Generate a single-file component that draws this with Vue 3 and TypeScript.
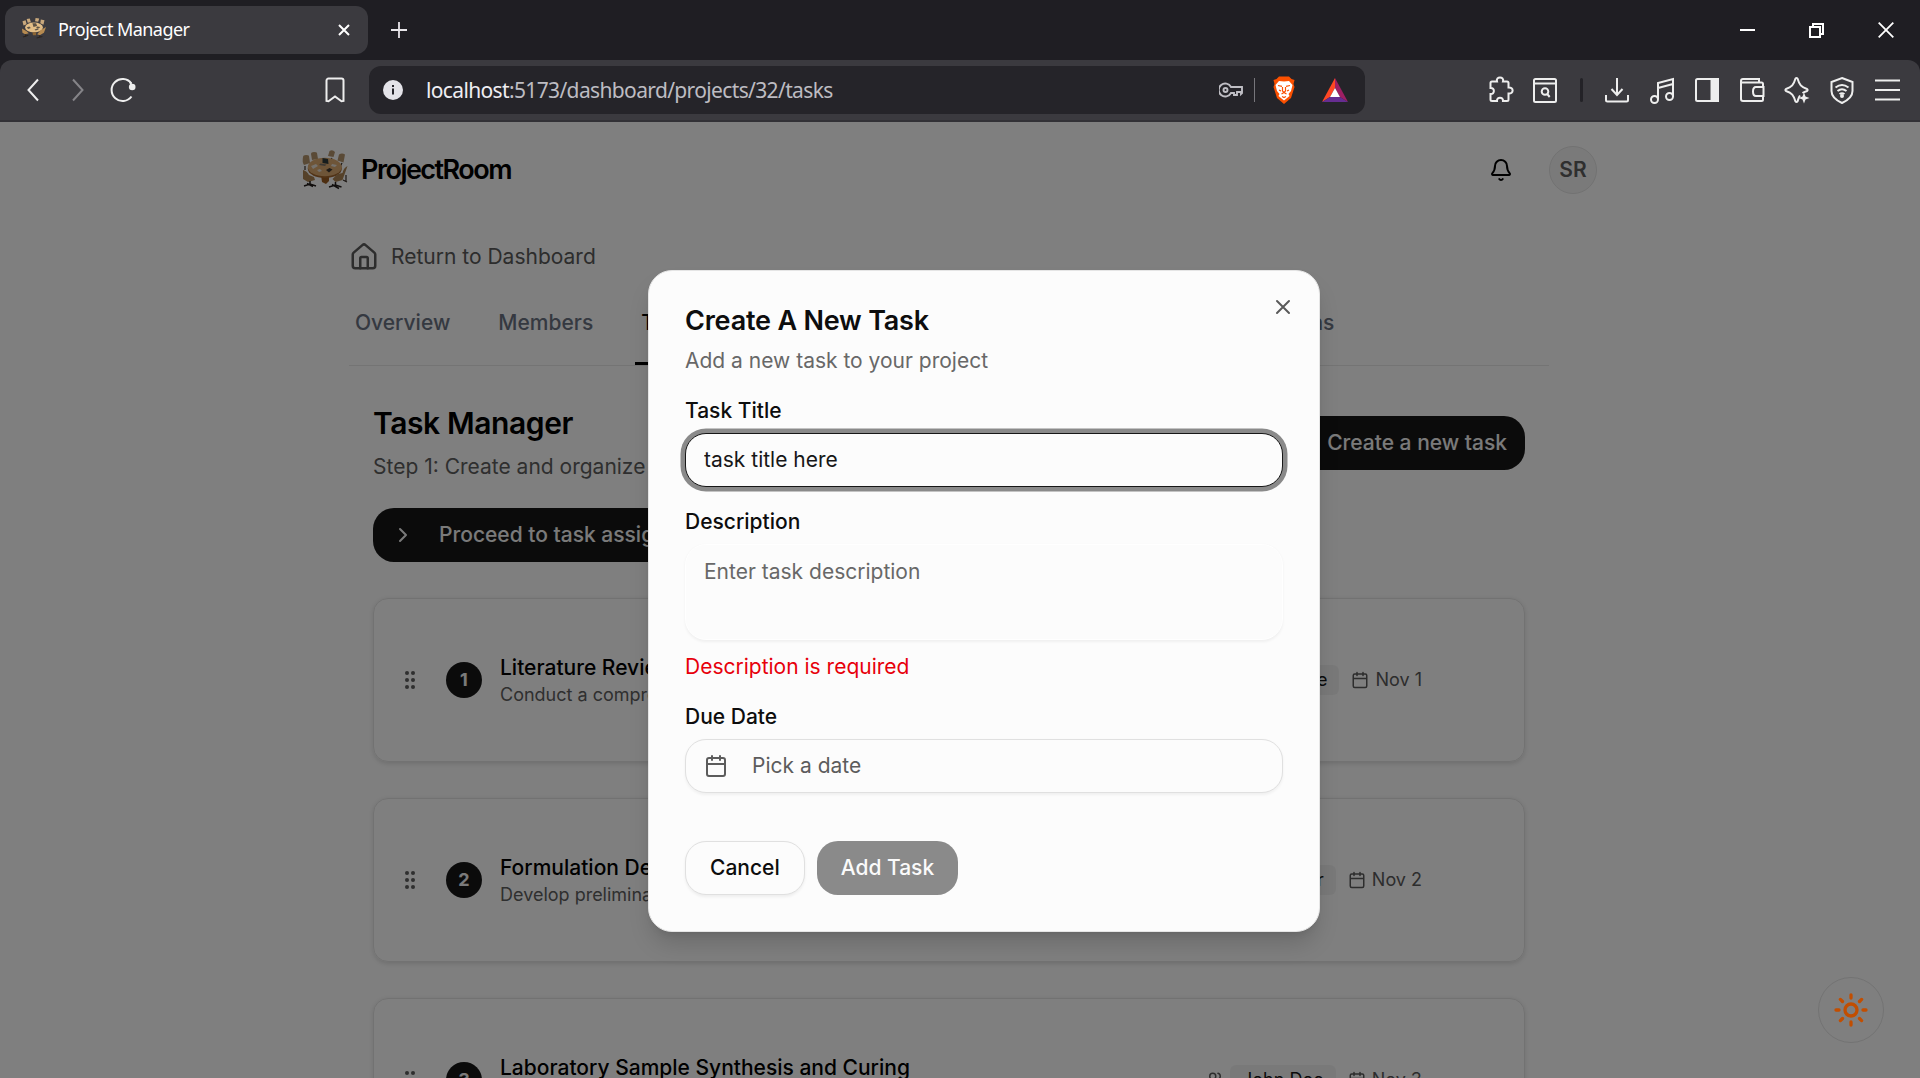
<script setup lang="ts">
import { ref } from 'vue'

interface Task {
  id: number
  title: string
  description: string
  assignee: string
  due: string
}

const tabs = ['Overview', 'Members', 'Tasks', 'Discussions', 'Submissions']
const activeTab = ref('Tasks')
const taskTitle = ref('task title here')
const description = ref('')
const tasks: Task[] = [
  { id: 1, title: 'Literature Review', description: 'Conduct a comprehensive review', assignee: 'John Doe', due: 'Nov 1' },
  { id: 2, title: 'Formulation Design', description: 'Develop preliminary mix', assignee: 'User', due: 'Nov 2' },
  { id: 3, title: 'Laboratory Sample Synthesis and Curing', description: 'Prepare samples', assignee: 'John Doe', due: 'Nov 3' },
]
const calendar = 'M8 2v4M16 2v4M5 4h14a2 2 0 0 1 2 2v14a2 2 0 0 1-2 2H5a2 2 0 0 1-2-2V6a2 2 0 0 1 2-2zM3 10h18'
</script>

<template>
  <div class="window">
    <div class="titlebar">
      <div class="tab">
        <svg class="favicon" viewBox="0 0 46 42">
          <path d="M1 8l6-2 2 8-6 2zM9 4l6-1 2 7-6 1zM26 2l7 1-2 6-6-1zM36 5l7 1-2 9-6-3z" fill="#c9a87c" />
          <ellipse cx="23" cy="20" rx="17" ry="9.500" fill="#e2bd86" />
          <path d="M20 12h7l2 5-7 2zM9 20l5-2 3 3-5 2zM29 18l6 1-3 3-5-1zM24 24l6-2 2 2-6 2z" fill="#5d5347" />
          <path d="M0 22l9 5 4 4-7 2-5-3zM46 19l-4 11-8 5-5-2 6-7z" fill="#b68a50" />
          <path d="M7 33v5M2 38l10-3M34 35v5M28 40l11-3" stroke="#2c2520" stroke-width="2" />
          <path d="M20 29h7v6h-6z" fill="#8c6534" />
        </svg>
        <span class="tab-title">Project Manager</span>
        <svg class="tab-close" viewBox="0 0 12 12"><path d="M1 1l10 10M11 1L1 11" stroke="#fff" stroke-width="2" /></svg>
      </div>
      <svg class="new-tab" viewBox="0 0 16 16"><path d="M8 0v16M0 8h16" stroke="#e8e6ea" stroke-width="1.8" /></svg>
      <div class="win-controls">
        <svg width="15" height="15" viewBox="0 0 15 15"><path d="M0 7h15" stroke="#fff" stroke-width="2" /></svg>
        <svg width="15" height="15" viewBox="0 0 15 15" fill="none" stroke="#fff" stroke-width="2"><path d="M1 4h10v10H1zM4 4V1h10v10h-3" /></svg>
        <svg width="16" height="16" viewBox="0 0 16 16"><path d="M.7.7l14.6 14.6M15.3.7L.7 15.3" stroke="#fff" stroke-width="1.8" /></svg>
      </div>
    </div>

    <div class="toolbar-wrap">
      <div class="toolbar">
        <svg class="nav-back" viewBox="0 0 12 24"><path d="M11 1.500L1.500 12 11 22.500" /></svg>
        <svg class="nav-fwd" viewBox="0 0 12 24"><path d="M1 1.500L10.500 12 1 22.500" /></svg>
        <svg class="nav-reload" viewBox="0 0 26 26"><path d="M21.300 6.300A11 11 0 1 0 21.500 19.500" /><circle cx="22.200" cy="10" r="3.300" fill="#eee" stroke="none" /><path d="M20 5l2 4" /></svg>
        <svg class="bookmark" viewBox="0 0 20 26"><path d="M1.500 3.500a2 2 0 0 1 2-2h13a2 2 0 0 1 2 2v20.500l-2 .3-6.500-4.800-6.500 4.800-2-.3z" /></svg>
        <div class="address">
          <span class="info"><svg width="20" height="20" viewBox="0 0 20 20"><circle cx="10" cy="10" r="10" fill="#e4e3e8" /><path d="M10 8.500v6M10 5v2" stroke="#252429" stroke-width="2" fill="none" /></svg></span>
          <span class="url"><b>localhost</b>:5173/dashboard/projects/32/tasks</span>
          <svg class="key" width="24" height="16" viewBox="0 0 24 16" fill="none" stroke="#bfbec4" stroke-width="1.900"><path d="M12 5a6.500 6.500 0 1 0 0 6h3v2h3v-3h4v2l1-1V5z" /><circle cx="6.500" cy="8" r="2" /></svg>
          <span class="addr-sep"></span>
          <svg class="lion" width="24" height="28" viewBox="0 0 24 28">
            <path d="M7 .500h10l2.500 2.500 3 1-1 4 1 3-3.500 11-7 6-7-6L1.500 11l1-3-1-4 3-1z" fill="#fb5000" />
            <path d="M7 5l5 .500L17 5l3.500 4-1.500 6-2.500 3 1 2-5.500 4.500L6.500 20l1-2L5 15 3.500 9z" fill="#fff" />
            <path d="M6 9.500l4 .8M18 9.500l-4 .8M9.500 18l2.500-1.500 2.500 1.500M10.500 11v4l1.500 1.500 1.500-1.500v-4M7 14l2 1M17 14l-2 1M10 20.500l2 1 2-1" stroke="#fb5000" stroke-width="1.200" fill="none" />
          </svg>
          <svg class="bat" width="26" height="24" viewBox="0 0 26 24"><path d="M13 0L0 24l8-5 5-9z" fill="#ff4724" /><path d="M13 0l13 24-8-5-5-9z" fill="#9e1f63" /><path d="M0 24h26l-8-5H8z" fill="#662d91" /><path d="M13 10l5 9H8z" fill="#fff" /></svg>
        </div>
        <div class="actions">
          <svg width="28" height="28" viewBox="0 0 28 28"><path d="M5 5.500h5c-1.500-5.500 7.500-5.500 6 0h4q1.500 0 1.500 1.500v4.500c5.500-.500 5.500 6.500 0 6v6q0 1.500-1.500 1.500h-4c.500-4.500-6.500-4.500-6 0H5q-1.500 0-1.500-1.500V18c4.500.500 4.500-6.500 0-6V7q0-1.500 1.500-1.500z" /></svg>
          <svg class="finder" width="28" height="28" viewBox="0 0 28 28"><rect x="3" y="3" width="22" height="23" rx="1.500" /><path d="M3 7.500h22" /><circle cx="14" cy="15.500" r="3.300" /><path d="M16.200 18l2.500 3" /></svg>
          <i class="divider"></i>
          <svg width="28" height="28" viewBox="0 0 28 28"><path d="M14 2v16M8.500 13l5.500 6 5.500-6M3 19v5q0 1.500 1.500 1.500h19q1.500 0 1.500-1.500v-5" /></svg>
          <svg width="28" height="28" viewBox="0 0 28 28"><path d="M10 23V7l15-4v18M10 12l15-4" /><circle cx="6.500" cy="23.500" r="3.500" /><circle cx="21.500" cy="20.500" r="3.500" /></svg>
          <svg width="28" height="28" viewBox="0 0 28 28"><rect x="3" y="3" width="22" height="22" rx="1.500" /><path d="M18.500 3H25v22h-6.500z" fill="#eee" /></svg>
          <svg width="28" height="28" viewBox="0 0 28 28"><path d="M25 10V8q0-1.500-1.500-1.500H3V5q0-2 2-2h16v3.500M3 6v17q0 2 2 2h18.500q1.500 0 1.500-1.500V21M25.500 11H18q-3 0-3 4.500t3 4.500h7.500z" /></svg>
          <svg width="28" height="28" viewBox="0 0 28 28"><path d="M17 19.500c-1.200 1.500-1.500 3-2.500 6-.600.800-1.400.800-2 0C10.500 19 9 17 3 15c-.800-.600-.800-1.400 0-2 6-2 7.500-4 9.500-10.500.600-.800 1.400-.800 2 0C16.500 9 18 11 24 13c.800.600.800 1.400 0 2-2 .700-3.500 1.300-4.500 2" /><path d="M21 16.500l1.500 4L26.500 22l-4 1.500-1.500 4-1.500-4-4-1.500 4-1.500z" fill="#eee" stroke="none" /></svg>
          <svg width="28" height="28" viewBox="0 0 28 28"><path d="M14 2l10.500 4v9c0 5-4 9-10.500 12C7.500 24 3.500 20 3.500 15V6z" /><path d="M7.500 11.500q6.500-5 13 0M9.500 15q4.500-3.500 9 0M11.500 18q2.500-1.700 5 0" /><circle cx="14" cy="20" r="1" /></svg>
          <svg width="28" height="28" viewBox="0 0 28 28"><path d="M2 4.500h25M2 14h25M2 23.500h25" /></svg>
        </div>
      </div>
    </div>

    <div class="page">
      <header class="header">
        <svg class="logo" viewBox="0 0 46 42">
          <path d="M3 17v4M13 12l2 4M30 9l-2 3M40 14l-2 4M44 26v6M41 31l4 2" stroke="#3a2f28" stroke-width="1.200" />
          <path d="M1 8q0-2 3-2t3 1l1 7-6 2q-2-3-1-8zM9 5q0-2 3-2t3 1l1 6-6 1zM27.500 2q3-2 5.500 1l-1.500 5-5.500-1zM37 5.500q3-2 6 0l-1.500 8-6-2z" fill="#b5956d" />
          <path d="M19 26l1 7 4 2 3-3v-6z" fill="#9a5c22" />
          <ellipse cx="22.800" cy="19.500" rx="17" ry="9.500" fill="#a3662c" />
          <ellipse cx="22.800" cy="18" rx="17" ry="9.300" fill="#dcaa70" />
          <path d="M20.500 9l5.500 1 .500 5-6-1z" fill="#2f3b3b" />
          <path d="M18.500 14.500l6 1-1.500 1.500-6-1z" fill="#7d7468" />
          <path d="M9 17l5-2 2 2-5 3zM30 15l5 1-2 2-4-1zM15 21l3-1 2 2-3 1z" fill="#ebe4da" />
          <path d="M24 21l3.500-2 3 1.500-3.500 3z" fill="#3f3932" />
          <path d="M1 21q4 1 6 5l5 2 1 3-7 2-5-3zM45.500 17q-4 2-5 7l-5 1-5 5 3 3 7-2z" fill="#ab8352" />
          <path d="M8 32v4M2 37l6-2 6 2M5 34.500l6 3M33.500 33v5M27 38l6.500-2 6 2M30 35.500l7 4" stroke="#231d1a" stroke-width="1.500" fill="none" />
        </svg>
        <span class="brand">ProjectRoom</span>
        <svg class="icon bell" width="24" height="24" viewBox="0 0 24 24"><path d="M10.268 21a2 2 0 0 0 3.464 0M3.262 15.326A1 1 0 0 0 4 17h16a1 1 0 0 0 .740-1.673C19.410 13.956 18 12.499 18 8A6 6 0 0 0 6 8c0 4.499-1.411 5.956-2.738 7.326" /></svg>
        <span class="avatar">SR</span>
      </header>

      <main class="content">
        <a class="return">
          <svg class="icon" width="30" height="30" viewBox="0 0 24 24"><path d="M15 21v-8a1 1 0 0 0-1-1h-4a1 1 0 0 0-1 1v8" /><path d="M3 10a2 2 0 0 1 .709-1.528l7-5.999a2 2 0 0 1 2.582 0l7 5.999A2 2 0 0 1 21 10v9a2 2 0 0 1-2 2H5a2 2 0 0 1-2-2z" /></svg>
          <span>Return to Dashboard</span>
        </a>
        <nav class="tabs">
          <a v-for="t in tabs" :key="t" :class="{ active: t === activeTab }">{{ t }}</a>
        </nav>

        <section class="manager">
          <div class="manager-head">
            <div>
              <h1>Task Manager</h1>
              <p>Step 1: Create and organize tasks</p>
            </div>
            <button class="btn dark create">
              <svg class="icon" width="24" height="24" viewBox="0 0 24 24"><path d="M5 12h14M12 5v14" /></svg>
              <span>Create a new task</span>
            </button>
          </div>
          <button class="btn dark proceed">
            <svg class="icon" width="24" height="24" viewBox="0 0 24 24"><path d="m9 18 6-6-6-6" /></svg>
            <span>Proceed to task assignment</span>
          </button>
          <div class="cards">
            <article v-for="t in tasks" :key="t.id" class="card">
              <svg class="grip" width="24" height="24" viewBox="0 0 24 24"><circle cx="9" cy="5" r="2" /><circle cx="9" cy="12" r="2" /><circle cx="9" cy="19" r="2" /><circle cx="15" cy="5" r="2" /><circle cx="15" cy="12" r="2" /><circle cx="15" cy="19" r="2" /></svg>
              <span class="num">{{ t.id }}</span>
              <div class="info-col">
                <div class="card-title">{{ t.title }}</div>
                <div class="card-desc">{{ t.description }}</div>
              </div>
              <div class="meta">
                <svg class="icon" width="18" height="18" viewBox="0 0 24 24"><path d="M16 21v-2a4 4 0 0 0-4-4H6a4 4 0 0 0-4 4v2M16 3.128a4 4 0 0 1 0 7.744M22 21v-2a4 4 0 0 0-3-3.870" /><circle cx="9" cy="7" r="4" /></svg>
                <span class="badge">{{ t.assignee }}</span>
                <svg class="icon cal" width="18" height="18" viewBox="0 0 24 24"><path :d="calendar" /></svg>
                <span>{{ t.due }}</span>
              </div>
            </article>
          </div>
        </section>
      </main>

      <div class="overlay"></div>

      <div class="theme">
        <svg class="icon" width="36" height="36" viewBox="0 0 24 24"><circle cx="12" cy="12" r="4" /><path d="M12 2v2M12 20v2M4.930 4.930l1.410 1.410M17.660 17.660l1.410 1.410M2 12h2M20 12h2M6.340 17.660l-1.410 1.410M19.070 4.930l-1.410 1.410" /></svg>
      </div>

      <div class="dialog" role="dialog">
        <svg class="icon close" width="24" height="24" viewBox="0 0 24 24"><path d="M18 6 6 18M6 6l12 12" /></svg>
        <h2>Create A New Task</h2>
        <p class="sub">Add a new task to your project</p>
        <label>Task Title</label>
        <input v-model="taskTitle" class="field focused" type="text" />
        <label>Description</label>
        <textarea v-model="description" class="field area" placeholder="Enter task description"></textarea>
        <p class="error">Description is required</p>
        <label>Due Date</label>
        <button class="field date">
          <svg class="icon" width="24" height="24" viewBox="0 0 24 24"><path :d="calendar" /></svg>
          <span>Pick a date</span>
        </button>
        <div class="footer">
          <button class="btn outline">Cancel</button>
          <button class="btn muted">Add Task</button>
        </div>
      </div>
    </div>
  </div>
</template>

<style>
body {
  margin: 0;
  overflow: hidden;
}
</style>

<style scoped>
* {
  box-sizing: border-box;
}
h1, h2, p {
  margin: 0;
}
svg {
  flex: none;
}
.window {
  width: 1920px;
  height: 1078px;
  overflow: hidden;
  display: flex;
  flex-direction: column;
  background: #1f1e23;
  font-family: Inter, sans-serif;
}
.titlebar {
  height: 60px;
  display: flex;
  align-items: center;
  flex: none;
}
.tab {
  width: 363px;
  height: 48px;
  margin-left: 5px;
  border-radius: 12px;
  background: #3b3a3f;
  display: flex;
  align-items: center;
  padding: 0 18px 0 16px;
}
.favicon {
  width: 26px;
  height: 22px;
  margin-top: -4px;
}
.tab-title {
  flex: 1;
  margin: -2px 0 0 11px;
  font: 18px/24px "Noto Sans", sans-serif;
  letter-spacing: -0.56px;
  color: #fff;
}
.tab-close {
  width: 12px;
  height: 12px;
}
.new-tab {
  width: 16px;
  height: 16px;
  margin-left: 23px;
}
.win-controls {
  margin-left: auto;
  display: flex;
  align-items: center;
  gap: 54px;
  margin-right: 26px;
}
.toolbar-wrap {
  height: 62px;
  flex: none;
}
.toolbar {
  height: 62px;
  background: #3b3a3f;
  border-radius: 12px 12px 0 0;
  border-bottom: 2px solid #323136;
  display: flex;
  align-items: center;
}
.toolbar > svg, .actions svg {
  fill: none;
  stroke: #eee;
  stroke-width: 2;
}
.nav-back {
  width: 12px;
  height: 24px;
  margin-left: 27px;
}
.toolbar > .nav-fwd {
  width: 12px;
  height: 24px;
  margin-left: 33px;
  stroke: #858488;
}
.nav-reload {
  width: 26px;
  height: 26px;
  margin-left: 26px;
}
.bookmark {
  width: 20px;
  height: 26px;
  margin-left: 189px;
}
.address {
  width: 996px;
  height: 48px;
  margin-left: 24px;
  background: #252429;
  border-radius: 12px;
  display: flex;
  align-items: center;
}
.info {
  display: flex;
  margin-left: 14px;
}
.url {
  flex: 1;
  margin-left: 23px;
  font: 21px/28px "Noto Sans", sans-serif;
  letter-spacing: -0.64px;
  color: #bdbcc2;
}
.url b {
  font-weight: 400;
  color: #efeef2;
}
.addr-sep {
  width: 1px;
  height: 24px;
  background: #77767b;
  margin: 0 17px 0 11px;
}
.bat {
  margin: 0 17px 0 26px;
}
.actions {
  display: flex;
  align-items: center;
  margin-left: 122px;
  gap: 17px;
}
.finder {
  margin-left: -1px;
}
.divider {
  width: 3px;
  height: 24px;
  background: #232227;
  border-radius: 2px;
  margin: 0 3px 0 4px;
}
.page {
  position: relative;
  flex: 1;
  background: #fefefe;
  overflow: hidden;
}
.icon {
  fill: none;
  stroke: currentColor;
  stroke-width: 2;
  stroke-linecap: round;
  stroke-linejoin: round;
}
.header {
  display: flex;
  align-items: center;
  height: 96px;
  padding: 0 323px 0 302px;
}
.logo {
  width: 46px;
  height: 42px;
}
.brand {
  margin-left: 13px;
  font-size: 27px;
  line-height: 36px;
  font-weight: 600;
  letter-spacing: -1.53px;
  color: #000;
}
.bell {
  margin-left: auto;
}
.avatar {
  width: 48px;
  height: 48px;
  margin-left: 36px;
  border: 1px solid #e4e4e4;
  border-radius: 50%;
  background: #f5f5f5;
  font-size: 21px;
  font-weight: 600;
  color: #5e5e5e;
  display: flex;
  align-items: center;
  justify-content: center;
  padding-bottom: 1px;
}
.content {
  width: 1200px;
  margin: 0 auto 0 349px;
}
.return {
  display: flex;
  align-items: center;
  height: 30px;
  margin-top: 24px;
  gap: 12px;
  font-size: 21px;
  color: #5a5a5a;
}
.return span {
  margin-top: -2px;
}
.tabs {
  display: flex;
  gap: 36px;
  height: 94px;
  border-bottom: 1.500px solid #e8e8e8;
}
.tabs a {
  padding: 36px 6px 0;
  font-size: 21px;
  line-height: 30px;
  font-weight: 500;
  color: #6a7282;
}
.tabs a.active {
  color: #000;
  border-bottom: 3px solid #000;
}
.tabs a:last-child {
  margin-left: 290px;
}
.manager {
  padding: 0 24px;
  width: 1200px;
}
.manager-head {
  display: flex;
  justify-content: space-between;
  padding-top: 36px;
}
h1 {
  font-size: 30px;
  line-height: 42px;
  font-weight: 600;
  letter-spacing: -0.4px;
  color: #000;
}
.manager-head p {
  font-size: 21px;
  line-height: 30px;
  margin-top: 8px;
  color: #5f5f5f;
}
.btn {
  height: 54px;
  border: 0;
  border-radius: 21px;
  font: 500 21px/30px Inter, sans-serif;
  padding: 0 18px;
}
.dark {
  background: #171717;
  color: #f5f5f5;
}
.create {
  display: flex;
  align-items: center;
  gap: 24px;
  margin-top: 14px;
}
.proceed {
  display: flex;
  align-items: center;
  gap: 24px;
  margin-top: 26px;
}
.cards {
  display: flex;
  flex-direction: column;
  gap: 36px;
  margin-top: 36px;
}
.card {
  height: 164px;
  border: 1.500px solid #e4e4e4;
  border-radius: 15px;
  box-shadow: 0 1.500px 4px rgba(0, 0, 0, 0.12);
  display: flex;
  align-items: center;
  padding: 0 102px 0 24px;
}
.grip {
  fill: #5e5e5e;
}
.num {
  width: 36px;
  height: 36px;
  margin: 0 18px 0 24px;
  border-radius: 50%;
  background: #171717;
  color: #f5f5f5;
  font-size: 18px;
  font-weight: 700;
  display: flex;
  align-items: center;
  justify-content: center;
  padding-bottom: 1px;
}
.info-col {
  flex: 1;
  white-space: nowrap;
  padding-top: 4px;
}
.card-title {
  font-size: 21px;
  line-height: 26px;
  font-weight: 500;
  color: #000;
}
.card-desc {
  font-size: 18px;
  line-height: 28px;
  color: #5f5f5f;
}
.meta {
  display: flex;
  align-items: center;
  font-size: 18px;
  color: #5a5a5a;
}
.meta span:last-child {
  margin-top: -1px;
}
.badge {
  height: 30px;
  line-height: 30px;
  margin: 0 12px 0 6px;
  padding: 0 12px;
  border-radius: 6px;
  background: #f3f3f3;
  color: #171717;
}
.cal {
  margin-right: 6px;
}
.overlay {
  position: absolute;
  inset: 0;
  background: rgba(0, 0, 0, 0.5);
}
.theme {
  position: absolute;
  left: 1818px;
  top: 855px;
  width: 66px;
  height: 66px;
  border: 1px solid #737373;
  border-radius: 50%;
  color: #c24e00;
  display: flex;
  align-items: center;
  justify-content: center;
}
.theme .icon {
  stroke-width: 2.2;
}
.dialog {
  position: absolute;
  left: 648px;
  top: 148px;
  width: 672px;
  height: 662px;
  padding: 36px;
  border: 1px solid #e5e5e5;
  border-radius: 24px;
  background: #fcfcfc;
  box-shadow: 0 15px 23px -4px rgba(0, 0, 0, 0.16), 0 6px 9px -6px rgba(0, 0, 0, 0.12);
  display: flex;
  flex-direction: column;
  color: #0d0d0d;
}
.close {
  position: absolute;
  right: 24px;
  top: 24px;
  color: #5a5a5a;
}
h2 {
  font-size: 27px;
  line-height: 27px;
  font-weight: 600;
  letter-spacing: -0.2px;
}
.sub {
  font-size: 21px;
  line-height: 30px;
  margin-top: 12px;
  color: #686868;
}
label {
  font-size: 21px;
  line-height: 22px;
  font-weight: 500;
  margin: 24px 0 11px;
}
.field {
  width: 598px;
  height: 54px;
  border: 1px solid #e0e0e0;
  border-radius: 21px;
  background: #fcfcfc;
  padding: 0 18px;
  font: 21px/30px Inter, sans-serif;
  color: #171717;
  outline: 0;
  box-shadow: 0 1.500px 3px rgba(0, 0, 0, 0.05);
}
.focused {
  border-color: #171717;
  box-shadow: 0 0 0 4.500px #8a8a8a;
}
.area {
  height: 97px;
  border-color: #fff;
  padding: 12px 18px;
  resize: none;
}
.area::placeholder {
  color: #686868;
}
.error {
  font-size: 21px;
  line-height: 30px;
  margin-top: 12px;
  color: #e7000b;
}
.date {
  display: flex;
  align-items: center;
  gap: 24px;
  color: #5c5c5c;
}
.footer {
  display: flex;
  gap: 12px;
  margin-top: 48px;
}
.outline {
  background: #fcfcfc;
  border: 1px solid #e0e0e0;
  padding: 0 24px;
  color: #0d0d0d;
  box-shadow: 0 1.500px 3px rgba(0, 0, 0, 0.06);
}
.muted {
  background: #8a8a8a;
  color: #fafafa;
  padding: 0 24px;
}
</style>
